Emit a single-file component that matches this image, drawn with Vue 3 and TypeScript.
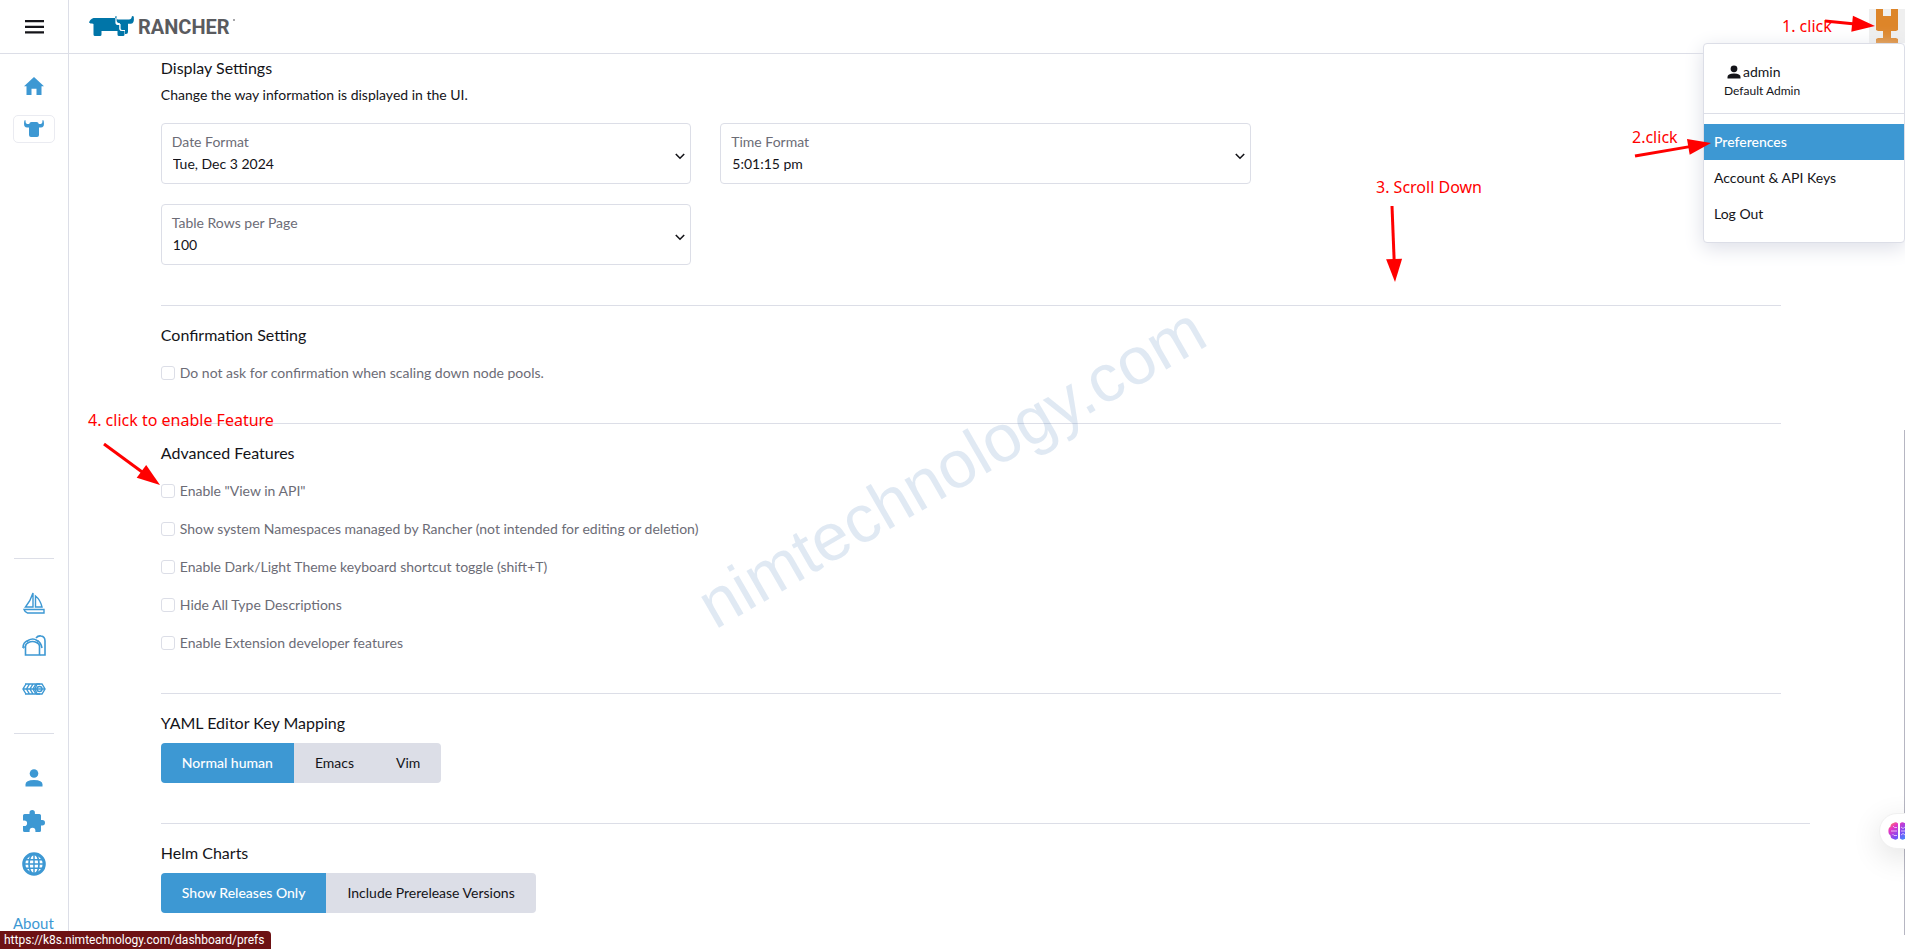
<script setup lang="ts">
import { ref } from 'vue'

interface SelectField {
  id: string
  label: string
  value: string
}

interface Arrow {
  from: [number, number]
  to: [number, number]
}

const fields: SelectField[] = [
  { id: 'date-format', label: 'Date Format', value: 'Tue, Dec 3 2024' },
  { id: 'time-format', label: 'Time Format', value: '5:01:15 pm' },
  { id: 'table-rows', label: 'Table Rows per Page', value: '100' },
]

const advanced = [
  'Enable "View in API"',
  'Show system Namespaces managed by Rancher (not intended for editing or deletion)',
  'Enable Dark/Light Theme keyboard shortcut toggle (shift+T)',
  'Hide All Type Descriptions',
  'Enable Extension developer features',
]

const keymaps = ['Normal human', 'Emacs', 'Vim']
const keymap = ref('Normal human')
const charts = ['Show Releases Only', 'Include Prerelease Versions']
const chart = ref('Show Releases Only')

const notes = [
  { text: '1. click', x: 1782, y: 32 },
  { text: '2.click', x: 1632, y: 143 },
  { text: '3. Scroll Down', x: 1376, y: 193 },
  { text: '4. click to enable Feature', x: 88, y: 426 },
]

const arrows: Arrow[] = [
  { from: [1825, 21], to: [1875, 26] },
  { from: [1635, 156], to: [1711, 143] },
  { from: [1392, 206], to: [1395, 282] },
  { from: [104, 444], to: [160, 485] },
]

function headPoints(a: Arrow): string {
  const dx = a.to[0] - a.from[0]
  const dy = a.to[1] - a.from[1]
  const len = Math.hypot(dx, dy)
  const ux = dx / len
  const uy = dy / len
  const bx = a.to[0] - ux * 23
  const by = a.to[1] - uy * 23
  return `${a.to[0]},${a.to[1]} ${bx - uy * 8},${by + ux * 8} ${bx + uy * 8},${by - ux * 8}`
}

function shaftEnd(a: Arrow): [number, number] {
  const dx = a.to[0] - a.from[0]
  const dy = a.to[1] - a.from[1]
  const len = Math.hypot(dx, dy)
  return [a.to[0] - (dx / len) * 20, a.to[1] - (dy / len) * 20]
}
</script>

<template>
  <div class="page">
    <header class="topbar">
      <button class="burger" type="button" aria-label="Menu">
        <svg width="19" height="14" viewBox="0 0 19 14"><path d="M0 1.2h19M0 6.8h19M0 12.4h19" stroke="#141419" stroke-width="2.2" /></svg>
      </button>
      <div class="brand">
        <svg width="46" height="21" viewBox="0 0 46 21" fill="#0075a8">
          <path d="M4.500 2H27v4.500q0 2 2 2h1.500v4.500q0 1.500 1.500 1.500h3.500V18.500q0 1.500-1.500 1.500h-4q-1.500 0-1.500-1.500V15H12.500v3.500q0 1.500-1.500 1.500H6q-1.500 0-1.500-1.500V8Q4 7.500 3 7.500H1.500L0 6.500Q1 3 4.500 2z" />
          <path d="M27.500 0q-.5 3 1 3.500H40q2.500 0 3-3.500l1.800.5q.7 7-2.800 7.300h-3V16q0 2-2 2l-1 0v-4h-3q-2 0-2-2V7.300Q26 7 26.200.6z" />
          <path d="M27 2v4.500q0 2 2.500 2h1.500V13q0 1.500 2 1.500h3" fill="none" stroke="#fff" stroke-width="1.200" />
        </svg>
        <span class="wordmark">RANCHER</span>
        <svg class="tm" width="2" height="2" viewBox="0 0 2 2"><circle cx="1" cy="1" r="1" fill="#8a8a8e" /></svg>
      </div>
      <button class="avatar" type="button" aria-label="User menu">
        <svg width="36" height="34" viewBox="0 0 36 34"><rect width="36" height="34" fill="#efefef" /><path d="M7 0h7v7h8V0h7v21l-2 1h-5v7h5l2 1v4H7v-4l2-1h5v-7H9l-2-1z" fill="#dd8529" /></svg>
      </button>
    </header>

    <nav class="side">
      <div class="group top">
        <a href="#" class="item" aria-label="Home">
          <svg width="20" height="18" viewBox="0 0 20 18" fill="#3d98d3"><path d="M10 0l10 9.200h-2.500V18h-5v-6.300h-5V18h-5V9.200H0z" /></svg>
        </a>
        <a href="#" class="item" aria-label="Cluster">
          <span class="pill">
            <svg width="20" height="17" viewBox="0 0 20 17" fill="#3d98d3"><path d="M1.500 0q-.2 3.800 1.500 4l2.200.1Q5.500 2 7.500 2h5q2 0 2.300 2.100L17 4q1.700-.2 1.500-4l1.100.6q1.400 6.900-2.600 7h-2V15q0 2-2 2H7q-2 0-2-2V7.600H3Q-1 7.500.4.600z" /></svg>
          </span>
        </a>
      </div>
      <div class="group">
        <a href="#" class="item" aria-label="Continuous Delivery">
          <svg width="22" height="23" viewBox="0 0 22 23" fill="none" stroke="#3d98d3" stroke-width="1.400"><path d="M10 2v14H2.500Q7.500 10 10 2zM12.500 5v11h6.500Q17.500 9 12.500 5zM1 18.500h20V22H4.500Q2 21.500 1 18.500z" /></svg>
        </a>
        <a href="#" class="item" aria-label="Cluster Management">
          <svg width="24" height="21" viewBox="0 0 24 21" fill="none" stroke="#3d98d3" stroke-width="1.600"><path d="M1 13q0-6 5-7.500 5-3 9 0 4 2 5 7.500" /><path d="M3.500 20v-9q0-2 3-3.500 4-2 8 0 3 1.500 3 3.500v9z" /><path d="M14 3q2-2.500 5-2 4 .5 4 5v14h-5" /><path d="M1.500 13.500 4 10M6.500 8 5 5.500M15 8l1.500-2.500" stroke-width="1" /></svg>
        </a>
        <a href="#" class="item" aria-label="Virtualization Management">
          <svg width="24" height="12" viewBox="0 0 24 12" fill="none" stroke="#3d98d3" stroke-width="1.400"><path d="M4 1 1 6l3 5M7.500 1l-3 5 3 5M11 1 8 6l3 5M14 1l-3 5 3 5M3 1h15M3 11h15M1 6h22" /><path d="M15 1h5l3 5-3 5h-5l-2-5z" /><circle cx="17.500" cy="6" r="2.500" /></svg>
        </a>
      </div>
      <div class="group">
        <a href="#" class="item" aria-label="Users">
          <svg width="18" height="18" viewBox="0 0 18 18" fill="#3d98d3"><circle cx="9" cy="4.500" r="4.300" /><path d="M.5 17.500v-2q0-4.500 8.500-4.500t8.500 4.500v2z" /></svg>
        </a>
        <a href="#" class="item" aria-label="Extensions">
          <svg width="22" height="22" viewBox="0 0 22 22" fill="#3d98d3"><path d="M6.500 4V2.800a2.700 2.700 0 0 1 5.400 0V4h4.500q1.600 0 1.600 1.600V10h1.300a2.700 2.700 0 0 1 0 5.400H18V20.400q0 1.600-1.600 1.600h-4v-1.400a2.900 2.900 0 0 0-5.800 0V22h-5Q0 22 0 20.400v-4.300h1.300a2.800 2.800 0 0 0 0-5.600H0V5.600Q0 4 1.600 4z" /></svg>
        </a>
        <a href="#" class="item" aria-label="Global Settings">
          <svg width="24" height="24" viewBox="0 0 23 23" fill="none" stroke="#3d98d3" stroke-width="1.600"><circle cx="11.500" cy="11.500" r="9.800" stroke-width="3" /><ellipse cx="11.500" cy="11.500" rx="4.800" ry="9.500" /><path d="M11.500 2v19M2 11.500h19M3.500 7.500h16M3.500 15.500h16" stroke-width="1.400" /></svg>
        </a>
      </div>
      <a href="#" class="about">About</a>
    </nav>

    <main class="main">
      <section>
        <h2>Display Settings</h2>
        <p class="desc">Change the way information is displayed in the UI.</p>
        <div class="fields">
          <div v-for="f in fields" :key="f.id" class="field">
            <label :for="f.id">{{ f.label }}</label>
            <select :id="f.id"><option>{{ f.value }}</option></select>
            <svg class="chevron" width="10" height="7" viewBox="0 0 10 7"><path d="M.8 1 5 5.200 9.200 1" fill="none" stroke="#141419" stroke-width="1.600" /></svg>
          </div>
        </div>
      </section>
      <hr />
      <section>
        <h2>Confirmation Setting</h2>
        <div class="checks">
          <label class="check"><input type="checkbox" />Do not ask for confirmation when scaling down node pools.</label>
        </div>
      </section>
      <hr />
      <section>
        <h2>Advanced Features</h2>
        <div class="checks">
          <label v-for="a in advanced" :key="a" class="check"><input type="checkbox" />{{ a }}</label>
        </div>
      </section>
      <hr />
      <section>
        <h2>YAML Editor Key Mapping</h2>
        <div class="switch">
          <button v-for="k in keymaps" :key="k" type="button" :class="{ on: k === keymap }" @click="keymap = k">{{ k }}</button>
        </div>
      </section>
      <hr class="wide" />
      <section>
        <h2>Helm Charts</h2>
        <div class="switch">
          <button v-for="c in charts" :key="c" type="button" :class="{ on: c === chart }" @click="chart = c">{{ c }}</button>
        </div>
      </section>
    </main>

    <div class="menu">
      <div class="who">
        <div class="name">
          <svg width="14" height="14" viewBox="0 0 14 14" fill="#141419"><circle cx="7" cy="3.800" r="3.400" /><path d="M.5 13.500V12Q.5 8.500 7 8.500t6.500 3.500v1.500z" /></svg>
          admin
        </div>
        <div class="role">Default Admin</div>
      </div>
      <a href="#" class="on">Preferences</a>
      <a href="#">Account &amp; API Keys</a>
      <a href="#">Log Out</a>
    </div>

    <div class="thumb"></div>
    <button class="bubble" type="button" aria-label="Assistant">
      <svg width="22" height="18" viewBox="0 0 22 18">
        <defs>
          <linearGradient id="brain" x1="0" y1="0" x2="1" y2="1">
            <stop offset="0" stop-color="#ff9a3c" /><stop offset=".25" stop-color="#e935c1" /><stop offset=".6" stop-color="#7a4df5" /><stop offset="1" stop-color="#2fa8ff" />
          </linearGradient>
        </defs>
        <path d="M10 1.500Q8-.5 5.500 1 2.500 1.500 2.500 4.500 0 6 .5 9q-.5 3 2 4.500 0 3 3 3.500 2.500 1.500 4.500-.5zM12 1.500q2-2 4.500-.5 3 .5 3 3.500 2.500 1.500 2 4.500.5 3-2 4.500 0 3-3 3.500-2.500 1.500-4.500-.5z" fill="url(#brain)" />
        <path d="M9 5.500H6.500L5 4M9 9H3M9 13.500H6L4.500 12M13 5l2 1.500L17 5M13 9h5M13 13l2-1.500 2 1.500" fill="none" stroke="#f3d9ff" stroke-width=".8" />
      </svg>
    </button>

    <svg class="overlay" width="100%" height="100%" aria-hidden="true">
      <text class="mark" transform="translate(715 630) rotate(-30)">nimtechnology.com</text>
      <g v-for="(a, i) in arrows" :key="i">
        <line :x1="a.from[0]" :y1="a.from[1]" :x2="shaftEnd(a)[0]" :y2="shaftEnd(a)[1]" stroke="#f00" stroke-width="3" />
        <polygon :points="headPoints(a)" fill="#f00" />
      </g>
      <text v-for="n in notes" :key="n.text" class="note" :x="n.x" :y="n.y">{{ n.text }}</text>
    </svg>
    <div class="status">https://k8s.nimtechnology.com/dashboard/prefs</div>
  </div>
</template>

<style>
body {
  margin: 0;
  background: #fff;
}
</style>

<style scoped>
.page {
  position: relative;
  display: grid;
  grid-template-columns: 69px minmax(0, 1fr);
  grid-template-rows: 54px 1fr;
  min-height: 100vh;
  overflow: hidden;
  font: 14px/20px Lato, sans-serif;
  color: #141419;
}
* {
  box-sizing: border-box;
}
button,
select,
input {
  font: inherit;
  color: inherit;
}
.topbar {
  grid-column: 1 / -1;
  display: flex;
  border-bottom: 1px solid #dcdee7;
}
.burger {
  width: 69px;
  padding: 0;
  border: 0;
  border-right: 1px solid #dcdee7;
  background: none;
}
.burger svg,
.item svg,
.avatar svg,
.brand svg {
  display: block;
}
.burger svg {
  margin: 0 auto;
}
.brand {
  display: flex;
  align-items: center;
  gap: 3px;
  flex: 1;
  padding-left: 20px;
}
.wordmark {
  font: bold 20px/24px Roboto, sans-serif;
  color: #5a5b5f;
}
.brand .tm {
  margin-bottom: 14px;
}
.avatar {
  align-self: flex-end;
  height: 44px;
  padding: 0;
  border: 0;
  background: none;
  display: flex;
}
.side {
  display: flex;
  flex-direction: column;
  border-right: 1px solid #dcdee7;
}
.group {
  display: flex;
  flex-direction: column;
  margin: 0 14px;
  padding: 22px 0 23px;
  border-top: 1px solid #dcdee7;
}
.group.top {
  flex: 1;
  padding-top: 10px;
  border-top: 0;
}
.item {
  display: flex;
  height: 43px;
  align-items: center;
  justify-content: center;
}
.group .pill {
  display: flex;
  flex: none;
  align-items: center;
  justify-content: center;
  width: 42px;
  height: 28px;
  border: 1px solid #eaebf1;
  border-radius: 5px;
}
.about {
  padding: 5px 0 16px 13px;
  font-size: 15px;
  color: #3d98d3;
  text-decoration: none;
}
.main {
  margin-right: 3px;
  padding: 4px 5% 35px;
}
h2 {
  margin: 0;
  font-size: 16px;
  font-weight: 400;
  line-height: 20px;
}
.desc {
  margin: 7px 0 18px;
}
.fields {
  display: grid;
  grid-template-columns: repeat(3, minmax(0, 1fr));
  gap: 20px 29px;
}
.field {
  position: relative;
}
.field:nth-child(3) {
  grid-column: 1;
}
.field label {
  position: absolute;
  left: 11px;
  top: 9px;
  color: #6c6c76;
}
.field select {
  display: block;
  width: 100%;
  height: 61px;
  padding: 20px 30px 0 11px;
  border: 1px solid #dcdee7;
  border-radius: 4px;
  background: none;
  appearance: none;
}
.chevron {
  position: absolute;
  right: 6px;
  top: 30px;
  pointer-events: none;
}
hr {
  margin: 40px 29px 19px 0;
  border: 0;
  border-top: 1px solid #dcdee7;
}
hr.wide {
  margin-right: 0;
}
.checks {
  display: grid;
  gap: 18px;
  margin-top: 18px;
  justify-items: start;
}
.check {
  display: flex;
  align-items: center;
  gap: 5px;
  color: #6c6c76;
}
.check input {
  width: 14px;
  height: 14px;
  margin: 0;
  border: 1px solid #dcdee7;
  border-radius: 3px;
  background: #fff;
  appearance: none;
}
.switch {
  display: inline-flex;
  margin-top: 10px;
  border-radius: 4px;
  overflow: hidden;
  vertical-align: top;
}
.switch button {
  height: 40px;
  padding: 0 21px;
  border: 0;
  background: #dcdee7;
}
.switch .on {
  background: #3d98d3;
  color: #fff;
  font-weight: 500;
}
.menu {
  position: absolute;
  top: 43px;
  right: 0;
  width: 202px;
  padding-bottom: 10px;
  border: 1px solid #dcdee7;
  border-radius: 4px;
  background: #fff;
  box-shadow: 0 5px 20px #dcdee7;
}
.who {
  margin-bottom: 10px;
  padding: 18px 20px 13px;
  border-bottom: 1px solid #dcdee7;
}
.name {
  display: flex;
  align-items: center;
  gap: 2px;
  padding-left: 3px;
}
.role {
  font-size: 12px;
  line-height: 18px;
}
.menu a {
  display: block;
  padding: 0 10px;
  line-height: 36px;
  color: #141419;
  text-decoration: none;
}
.menu a.on {
  background: #3d98d3;
  color: #fff;
  font-weight: 500;
}
.thumb {
  position: absolute;
  top: 430px;
  right: 0;
  bottom: 14px;
  width: 1px;
  background: #b6b6c2;
}
.bubble {
  position: absolute;
  right: -20px;
  bottom: 100px;
  display: flex;
  align-items: center;
  width: 46px;
  height: 36px;
  padding: 0 0 0 8px;
  border: 1px solid #f0f0f0;
  border-radius: 18px;
  background: #fff;
  box-shadow: 0 8px 30px rgba(0, 0, 0, 0.12);
}
.bubble svg {
  flex: none;
}
.overlay {
  position: absolute;
  inset: 0;
  pointer-events: none;
}
.mark {
  font: 67px "Liberation Sans", Arial, sans-serif;
  fill: rgba(70, 125, 185, 0.17);
}
.note {
  font: 16px "Noto Sans", sans-serif;
  fill: #f00;
}
.status {
  position: absolute;
  left: 0;
  bottom: 0;
  padding: 0 7px 0 4px;
  border-top-right-radius: 4px;
  background: #6d1214;
  color: #fff;
  font: 12px/18px Roboto, sans-serif;
}
</style>
